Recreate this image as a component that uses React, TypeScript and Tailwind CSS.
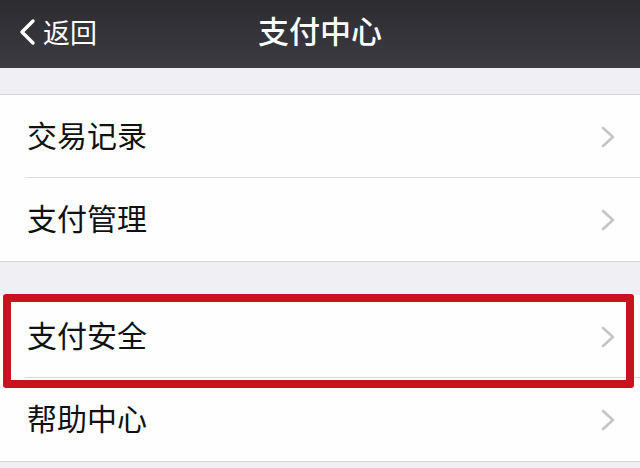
import React from "react";

const font = { fontFamily: '"Noto Sans CJK SC", "Noto Sans", sans-serif' };

function Chevron() {
  return (
    <svg width="16" height="22" viewBox="0 0 16 22" className="shrink-0">
      <path d="M3 2 L13 11 L3 20" fill="none" stroke="#c4c4c9" strokeWidth="2.6" strokeLinecap="round" strokeLinejoin="round" />
    </svg>
  );
}

function Row({ label, sep }: { label: string; sep?: boolean }) {
  return (
    <div className="relative flex h-[83px] items-center justify-between pl-[27px] pr-[24px]">
      <span className="pb-[5px] text-[30px] leading-none text-[#111]">{label}</span>
      <Chevron />
      {sep && <div className="absolute bottom-0 left-[25px] right-0 h-px bg-[#dcdce0]" />}
    </div>
  );
}

export default function App() {
  return (
    <div className="h-[468px] w-[640px] overflow-hidden bg-[#efeff4]" style={font}>
      <div className="relative flex h-[68px] items-center justify-center bg-gradient-to-b from-[#2d2c31] to-[#3c3b41]">
        <div className="absolute left-[17px] top-0 flex h-full items-center gap-[6px] pb-[5px]">
          <svg width="20" height="28" viewBox="0 0 20 28">
            <path d="M16 3 L5 14 L16 25" fill="none" stroke="#ffffff" strokeWidth="3.4" strokeLinecap="round" strokeLinejoin="round" />
          </svg>
          <span className="text-[27px] leading-none text-white">返回</span>
        </div>
        <span className="pb-[10px] text-[31px] font-medium leading-none text-white">支付中心</span>
      </div>
      <div className="h-[26px]" />
      <div className="border-y border-[#d6d6db] bg-[#fefefe]">
        <Row label="交易记录" sep />
        <Row label="支付管理" />
      </div>
      <div className="h-[33px]" />
      <div className="relative border-b border-[#d6d6db] bg-[#fefefe]">
        <Row label="支付安全" sep />
        <Row label="帮助中心" />
        <div className="absolute left-[3px] top-[-1px] h-[94px] w-[631px] rounded-[3px] border-[8px] border-[#c8121e]" />
      </div>
    </div>
  );
}
